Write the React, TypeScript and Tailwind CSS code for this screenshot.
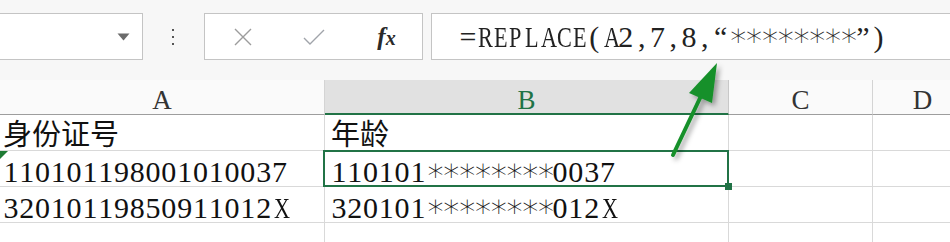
import React from 'react';

const serif = { fontFamily: '"Liberation Serif", "Noto Sans CJK SC", serif' };
const cjk = { fontFamily: '"Noto Sans CJK SC", "Liberation Sans", sans-serif' };

// SimSun-like fixed pitch text: every glyph sits in a 15.8px slot
function Mono({ text }: { text: string }) {
  return (
    <div className="flex h-[30px] text-[30px] leading-none" style={serif}>
      {[...text].map((c, i) => {
        let inner: React.ReactNode = c;
        if (c === '*') {
          inner = (
            <span
              className="inline-block w-[15.8px] -translate-y-[3px] text-center text-[32px] font-light leading-none"
              style={{ fontFamily: '"DejaVu Sans", sans-serif' }}
            >
              ∗
            </span>
          );
        } else if (/[A-Z]/.test(c)) {
          inner = <span className="inline-block w-[15.8px] scale-x-[0.74] text-center">{c}</span>;
        }
        return (
          <span key={i} className="flex h-[30px] w-[15.8px] shrink-0 items-start justify-center">
            {inner}
          </span>
        );
      })}
    </div>
  );
}

function Toolbar() {
  return (
    <div className="flex h-[80px] items-start bg-[#f7f7f7] pt-[13px]">
      {/* name box */}
      <div className="flex h-[47px] w-[143px] items-center justify-end border-y border-r border-[#c4c4c4] bg-white pr-[12px]">
        <svg width="13" height="8" viewBox="0 0 13 8">
          <path d="M0.5 0.5 H12.5 L6.5 7.5 Z" fill="#6b6b6b" />
        </svg>
      </div>
      <div className="flex h-[47px] w-[61px] flex-col items-center justify-center gap-[5px] pr-[2px]">
        <span className="h-[2px] w-[2px] bg-[#555]" />
        <span className="h-[2px] w-[2px] bg-[#555]" />
        <span className="h-[2px] w-[2px] bg-[#555]" />
      </div>
      {/* cancel / enter / fx */}
      <div className="flex h-[47px] w-[219px] items-center border border-[#c4c4c4] bg-white">
        <div className="flex w-[76px] justify-center">
          <svg width="20" height="20" viewBox="0 0 20 20">
            <path d="M2 2 L18 18 M18 2 L2 18" stroke="#9c9c9c" strokeWidth="1.4" fill="none" />
          </svg>
        </div>
        <div className="flex w-[66px] justify-center">
          <svg width="22" height="18" viewBox="0 0 22 18">
            <path d="M1 10 L7 16 L21 2" stroke="#a0a4aa" strokeWidth="1.4" fill="none" />
          </svg>
        </div>
        <div className="flex flex-1 justify-center pl-[4px]">
          <span className="text-[25px] font-bold italic leading-none text-[#2a2a2a]" style={{ fontFamily: '"Liberation Serif", serif' }}>
            f<span className="text-[20px]">x</span>
          </span>
        </div>
      </div>
      <div className="w-[8px]" />
      {/* formula bar */}
      <div className="h-[47px] flex-1 border-y border-l border-[#c4c4c4] bg-white pl-[28px] pt-[8px] text-[#222]">
        <Mono text="=REPLACE(A2,7,8,“********”)" />
      </div>
    </div>
  );
}

function HeaderCell({ label, w, active }: { label: string; w: string; active?: boolean }) {
  return (
    <div
      className={`${w} flex h-[35px] shrink-0 justify-center border-r pt-[7px] text-[27px] leading-none ${
        active
          ? 'border-[#c8c8c8] border-b-2 border-b-[#217346] bg-[#e1e1e1] text-[#217346]'
          : 'border-[#d4d4d4] border-b border-b-[#9d9d9d] bg-[#fafafa] text-[#333]'
      }`}
      style={serif}
    >
      {label}
    </div>
  );
}

function Cell({ w, children, cls = '' }: { w: string; children?: React.ReactNode; cls?: string }) {
  return (
    <div className={`${w} relative h-[36px] shrink-0 whitespace-pre border-r border-b border-[#d9d9d9] pl-[3px] ${cls}`}>
      {children}
    </div>
  );
}

export default function App() {
  const cols = ['w-[325px]', 'w-[404px]', 'w-[144px]', 'w-[100px]'];
  return (
    <div className="relative h-[242px] w-[950px] overflow-hidden bg-white text-[#111]">
      <Toolbar />
      <div className="flex">
        <HeaderCell label="A" w={cols[0]} />
        <HeaderCell label="B" w={cols[1]} active />
        <HeaderCell label="C" w={cols[2]} />
        <HeaderCell label="D" w={cols[3]} />
      </div>
      <div className="flex">
        <Cell w={cols[0]}>
          <div className="pt-[3px] text-[29px] leading-none" style={cjk}>身份证号</div>
        </Cell>
        <Cell w={cols[1]} cls="pl-[6px]">
          <div className="pt-[3px] text-[29px] leading-none" style={cjk}>年龄</div>
        </Cell>
        <Cell w={cols[2]} />
        <Cell w={cols[3]} />
      </div>
      <div className="flex">
        <Cell w={cols[0]} cls="pt-[6px]">
          <svg className="absolute left-0 top-0" width="8" height="8" viewBox="0 0 8 8">
            <path d="M0 0 H8 L0 8 Z" fill="#1e7a34" />
          </svg>
          <Mono text="110101198001010037" />
        </Cell>
        <Cell w={cols[1]} cls="z-10 pl-[6px] pt-[6px]">
          <div className="pointer-events-none absolute inset-[-1px_-1px_-1px_-2px] border-2 border-[#217346]" />
          <div className="absolute bottom-[-4px] right-[-4px] h-[7px] w-[7px] bg-[#217346]" />
          <Mono text="110101********0037" />
        </Cell>
        <Cell w={cols[2]} />
        <Cell w={cols[3]} />
      </div>
      <div className="flex">
        <Cell w={cols[0]} cls="pt-[6px]">
          <Mono text="32010119850911012X" />
        </Cell>
        <Cell w={cols[1]} cls="pl-[6px] pt-[6px]">
          <Mono text="320101********012X" />
        </Cell>
        <Cell w={cols[2]} />
        <Cell w={cols[3]} />
      </div>
      <div className="flex">
        <Cell w={cols[0]} />
        <Cell w={cols[1]} />
        <Cell w={cols[2]} />
        <Cell w={cols[3]} />
      </div>
      {/* annotation arrow */}
      <svg className="pointer-events-none absolute left-0 top-0 z-20" width="950" height="242" viewBox="0 0 950 242">
        <defs>
          <filter id="sh" x="-50%" y="-50%" width="200%" height="200%">
            <feDropShadow dx="3" dy="3" stdDeviation="2.5" floodColor="#000" floodOpacity="0.35" />
          </filter>
        </defs>
        <g filter="url(#sh)">
          <path d="M673 155 L701 96" stroke="#15902a" strokeWidth="4" strokeLinecap="round" />
          <path d="M717 63 L689 93 L712 103 Z" fill="#15902a" />
        </g>
      </svg>
    </div>
  );
}
